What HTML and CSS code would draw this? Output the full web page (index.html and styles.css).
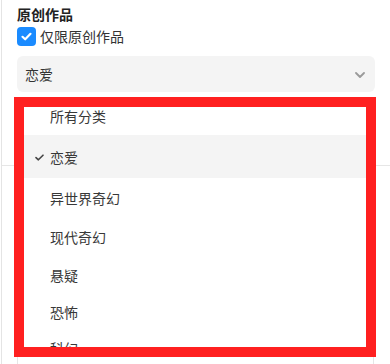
FILE: index.html
```html
<!DOCTYPE html>
<html lang="zh">
<head>
<meta charset="utf-8">
<link rel="stylesheet" href="styles.css">
</head>
<body>
<div class="page">
  <section class="group">
    <div class="title">原创作品</div>
    <label class="check-row">
      <span class="checkbox">
        <svg width="19" height="19" viewBox="0 0 19 19"><polyline points="5.5,9.8 8.2,12.3 13.5,6.8" fill="none" stroke="#fff" stroke-width="2.2" stroke-linecap="round" stroke-linejoin="round"/></svg>
      </span>
      <span class="check-label">仅限原创作品</span>
    </label>
    <div class="select">
      <span class="select-value">恋爱</span>
      <svg class="chev" width="10" height="6" viewBox="0 0 10 6"><polyline points="1,1 5,5 9,1" fill="none" stroke="#9a9a9a" stroke-width="1.8" stroke-linecap="round" stroke-linejoin="round"/></svg>
    </div>
  </section>
  <section class="group2">
    <div class="field"></div>
  </section>

  <div class="dropdown">
    <div class="opt first">所有分类</div>
    <div class="opt sel">
      <svg class="tick" width="9" height="7" viewBox="0 0 9 7"><polyline points="1,3.6 3.4,5.8 8,1.2" fill="none" stroke="#444" stroke-width="1.6" stroke-linecap="round" stroke-linejoin="round"/></svg>
      恋爱
    </div>
    <div class="opt tall">异世界奇幻</div>
    <div class="opt">现代奇幻</div>
    <div class="opt">悬疑</div>
    <div class="opt short">恐怖</div>
    <div class="opt">科幻</div>
  </div>
  <div class="mark"></div>
</div>
</body>
</html>
```

FILE: styles.css
```css
html, body {
  margin: 0;
  padding: 0;
  background: #fff;
}
body {
  font-family: "Noto Sans CJK SC", "Noto Sans", sans-serif;
  color: #333;
  width: 390px;
  height: 364px;
  overflow: hidden;
}
.page {
  position: relative;
  margin-left: 1px;
  border-left: 1px solid #e4e4e4;
  height: 364px;
}
.group {
  padding: 4px 14px 0 15px;
  height: 161px;
  border-bottom: 1px solid #e6e6e6;
}
.title {
  font-size: 14px;
  font-weight: 700;
  line-height: 20px;
  height: 20px;
  color: #222;
}
.check-row {
  display: flex;
  align-items: center;
  gap: 4px;
  margin-top: 2px;
  height: 20px;
}
.checkbox {
  width: 19px;
  height: 19px;
  border-radius: 4px;
  background: #1a8bff;
  display: flex;
}
.check-label {
  font-size: 14px;
  line-height: 20px;
  color: #333;
}
.select {
  margin-top: 10px;
  height: 36px;
  width: 358px;
  box-sizing: border-box;
  background: #f4f4f4;
  border-radius: 6px;
  display: flex;
  align-items: center;
  justify-content: space-between;
  padding: 0 10px 0 8px;
}
.select-value {
  font-size: 14px;
  color: #333;
}
.chev {
  display: block;
  margin-top: 1px;
}
.group2 {
  padding: 14px 14px 0 15px;
}
.field {
  height: 200px;
  width: 357px;
  box-sizing: border-box;
  border: 1px solid #e6e6e6;
  border-radius: 6px;
}
.dropdown {
  position: absolute;
  left: 12px;
  top: 97px;
  width: 362px;
  height: 260px;
  background: #fff;
  overflow: hidden;
}
.opt {
  height: 38px;
  display: flex;
  align-items: center;
  padding-left: 36px;
  font-size: 14px;
  color: #383838;
  position: relative;
}
.opt.sel {
  height: 43px;
  background: #f4f4f4;
}
.opt.tall {
  height: 40px;
}
.opt.short {
  height: 35px;
}
.tick {
  position: absolute;
  left: 21px;
  top: 19px;
}
.mark {
  position: absolute;
  left: 12px;
  top: 97px;
  width: 362px;
  height: 260px;
  box-sizing: border-box;
  border: 10px solid #ff2020;
}
```
